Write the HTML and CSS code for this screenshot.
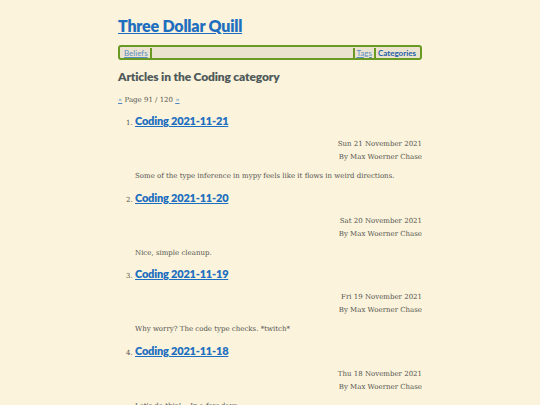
FILE: index.html
```html
<!DOCTYPE html>
<html>
<head>
<meta charset="utf-8">
<link rel="stylesheet" href="styles.css">
</head>
<body>
<div class="page">
  <h1 class="site-title"><a href="#">Three Dollar Quill</a></h1>
  <nav class="nav">
    <a class="nav-link" href="#">Beliefs</a>
    <span class="sep"></span>
    <span class="spacer"></span>
    <span class="sep"></span>
    <a class="nav-link" href="#">Tags</a>
    <span class="sep"></span>
    <span class="nav-current">Categories</span>
  </nav>
  <h2 class="heading">Articles in the Coding category</h2>
  <p class="pager"><a href="#">«</a> Page 91 / 120 <a href="#">»</a></p>
  <ol class="articles">
    <li class="article">
      <h3 class="article-title"><a href="#">Coding 2021-11-21</a></h3>
      <div class="meta">
        <div>Sun 21 November 2021</div>
        <div>By Max Woerner Chase</div>
      </div>
      <p class="summary">Some of the type inference in mypy feels like it flows in weird directions.</p>
    </li>
    <li class="article">
      <h3 class="article-title"><a href="#">Coding 2021-11-20</a></h3>
      <div class="meta">
        <div>Sat 20 November 2021</div>
        <div>By Max Woerner Chase</div>
      </div>
      <p class="summary">Nice, simple cleanup.</p>
    </li>
    <li class="article">
      <h3 class="article-title"><a href="#">Coding 2021-11-19</a></h3>
      <div class="meta">
        <div>Fri 19 November 2021</div>
        <div>By Max Woerner Chase</div>
      </div>
      <p class="summary">Why worry? The code type checks. *twitch*</p>
    </li>
    <li class="article">
      <h3 class="article-title"><a href="#">Coding 2021-11-18</a></h3>
      <div class="meta">
        <div>Thu 18 November 2021</div>
        <div>By Max Woerner Chase</div>
      </div>
      <p class="summary">Let's do this!... In a few days.</p>
    </li>
  </ol>
</div>
</body>
</html>
```
FILE: styles.css
```css
html, body {
  margin: 0;
  padding: 0;
  background: #fbf3dc;
}
body {
  font-family: "DejaVu Serif", serif;
  color: #555550;
}
.page {
  width: 304px;
  margin: 0 auto;
  padding-top: 14px;
}
.site-title {
  margin: 0;
  font-family: "Lato", sans-serif;
  font-size: 16px;
  letter-spacing: -0.2px;
  font-weight: 800;
  line-height: 24px;
}
.site-title a {
  color: #1e6fbf;
}
.nav {
  margin-top: 7px;
  display: flex;
  align-items: center;
  height: 11px;
  border: 2px solid #6a9a24;
  border-radius: 3px;
  background: #ebe3cf;
  padding: 0 2px;
  font-family: "Lato", sans-serif;
  font-size: 8px;
}
.nav-link {
  color: #5a8cc4;
  padding: 0 2px;
}
.nav-current {
  color: #1e5fa8;
  font-weight: 700;
  padding: 0 2px;
}
.sep {
  width: 2px;
  height: 10px;
  background: #6a9a24;
}
.spacer {
  flex: 1;
}
.heading {
  margin: 9px 0 0;
  font-family: "Lato", sans-serif;
  font-size: 12px;
  letter-spacing: -0.15px;
  font-weight: 800;
  color: #505a5a;
  line-height: 16px;
}
.pager {
  margin: 10px 0 0;
  font-size: 7px;
  line-height: 10px;
}
.pager a {
  color: #4a86c8;
}
.articles {
  margin: 7px 0 0;
  padding-left: 17px;
  font-size: 7px;
}
.article {
  height: 76.5px;
}
.article-title {
  margin: 0;
  font-family: "Lato", sans-serif;
  font-size: 11px;
  letter-spacing: -0.2px;
  font-weight: 800;
  line-height: 18px;
}
.article-title a {
  color: #1e6fbf;
}
.meta {
  margin-top: 8px;
  text-align: right;
  font-size: 7px;
  line-height: 13px;
}
.summary {
  margin: 6px 0 0;
  font-size: 7px;
  line-height: 12px;
}
```
